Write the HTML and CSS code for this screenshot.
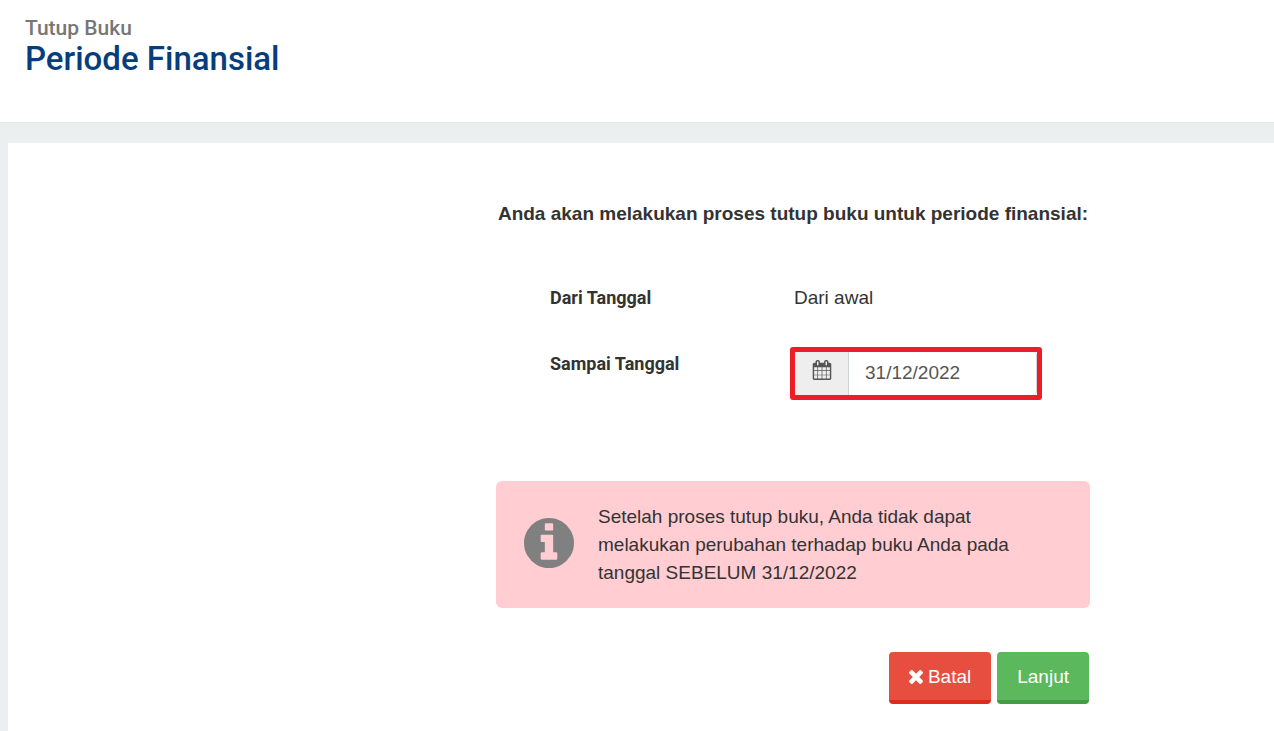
FILE: index.html
```
<!DOCTYPE html>
<html lang="id">
<head>
  <meta charset="UTF-8" />
  <title>Tutup Buku - Periode Finansial</title>
  <meta name="viewport" content="width=device-width, initial-scale=1" />
  <link rel="stylesheet" href="styles.css">
</head>
<body>

  <header class="page-header">
    <p class="page-section">Tutup Buku</p>
    <h1>Periode Finansial</h1>
  </header>

  <main class="panel">
    <form class="closing-form">
      <h2>Anda akan melakukan proses tutup buku untuk periode finansial:</h2>

      <div class="period">
        <span class="label">Dari Tanggal</span>
        <span class="value">Dari awal</span>

        <label class="label label-field" for="endDate">Sampai Tanggal</label>
        <div class="date-group">
          <span class="date-icon">
            <svg viewBox="0 0 1792 1792" aria-hidden="true"><path d="M192 1664h288v-288h-288v288zm352 0h320v-288h-320v288zm-352-352h288v-320h-288v320zm352 0h320v-320h-320v320zm-352-384h288v-288h-288v288zm736 736h320v-288h-320v288zm-384-736h320v-288h-320v288zm768 736h288v-288h-288v288zm-384-352h320v-320h-320v320zm-352-864v-288q0-13-9.500-22.500t-22.500-9.500h-64q-13 0-22.500 9.500t-9.500 22.500v288q0 13 9.500 22.500t22.500 9.500h64q13 0 22.500-9.500t9.500-22.500zm736 864h288v-320h-288v320zm-384-384h320v-288h-320v288zm384 0h288v-288h-288v288zm32-480v-288q0-13-9.500-22.500t-22.500-9.500h-64q-13 0-22.500 9.500t-9.500 22.500v288q0 13 9.500 22.500t22.500 9.500h64q13 0 22.500-9.500t9.500-22.500zm384-64v1280q0 52-38 90t-90 38h-1408q-52 0-90-38t-38-90v-1280q0-52 38-90t90-38h128v-96q0-66 47-113t113-47h64q66 0 113 47t47 113v96h384v-96q0-66 47-113t113-47h64q66 0 113 47t47 113v96h128q52 0 90 38t38 90z"/></svg>
          </span>
          <input type="text" id="endDate" value="31/12/2022" />
        </div>
      </div>

      <div class="notice">
        <svg class="notice-icon" viewBox="128 128 1536 1536" aria-hidden="true"><path d="M1152 1376v-160q0-14-9-23t-23-9h-96v-512q0-14-9-23t-23-9h-320q-14 0-23 9t-9 23v160q0 14 9 23t23 9h96v320h-96q-14 0-23 9t-9 23v160q0 14 9 23t23 9h448q14 0 23-9t9-23zm-128-896v-160q0-14-9-23t-23-9h-192q-14 0-23 9t-9 23v160q0 14 9 23t23 9h192q14 0 23-9t9-23zm640 416q0 209-103 385.500t-279.500 279.500-385.500 103-385.500-103-279.500-279.500-103-385.500 103-385.500 279.500-279.500 385.500-103 385.500 103 279.500 279.500 103 385.500z"/></svg>
        <p>Setelah proses tutup buku, Anda tidak dapat melakukan perubahan terhadap buku Anda pada tanggal SEBELUM 31/12/2022</p>
      </div>

      <div class="actions">
        <button type="button" class="btn btn-danger">
          <svg viewBox="302 366 1188 1188" aria-hidden="true"><path d="M1490 1322q0 40-28 68l-136 136q-28 28-68 28t-68-28l-294-294-294 294q-28 28-68 28t-68-28l-136-136q-28-28-28-68t28-68l294-294-294-294q-28-28-28-68t28-68l136-136q28-28 68-28t68 28l294 294 294-294q28-28 68-28t68 28l136 136q28 28 28 68t-28 68l-294 294 294 294q28 28 28 68z"/></svg>
          Batal
        </button>
        <button type="submit" class="btn btn-success">Lanjut</button>
      </div>
    </form>
  </main>

</body>
</html>
```

FILE: styles.css
```
* {
  box-sizing: border-box;
}

body {
  margin: 0;
  min-height: 100vh;
  display: flex;
  flex-direction: column;
  background: #ebeff0;
  font-family: "Liberation Sans", Arial, sans-serif;
  font-size: 19px;
  line-height: 28px;
  color: #333;
}

.page-header {
  padding: 16px 25px 44px;
  background: #fff;
  border-bottom: 1px solid #e3e8e9;
  font-family: Roboto, sans-serif;
}

.page-section {
  margin: 0;
  font-size: 21px;
  font-weight: 500;
  line-height: 24px;
  color: #777;
}

h1 {
  margin: 0;
  font-size: 33px;
  font-weight: 500;
  line-height: 38px;
  color: #073d7c;
}

.panel {
  flex: 1;
  margin: 20px 0 0 8px;
  padding: 57px 184px 27px 24px;
  background: #fff;
}

.closing-form {
  max-width: 594px;
  margin-left: auto;
}

h2 {
  margin: 0;
  font-size: 19px;
  line-height: 28px;
  text-align: center;
}

.period {
  display: grid;
  grid-template-columns: 240px 252px;
  row-gap: 35px;
  padding: 56px 0 81px 54px;
}

.label {
  font-family: Roboto, sans-serif;
  font-size: 18px;
  font-weight: 700;
}

.label-field {
  padding-top: 3px;
}

.value {
  padding-left: 4px;
}

.date-group {
  display: flex;
  height: 53px;
  border: 5px solid #ee1c25;
  border-radius: 3px;
}

.date-icon {
  width: 54px;
  display: flex;
  justify-content: center;
  padding-top: 8px;
  background: #eee;
  border-right: 1px solid #cbd5d6;
}

.date-icon svg {
  width: 20px;
  height: 20px;
  fill: #555;
}

.date-group input {
  flex: 1;
  min-width: 0;
  padding: 0 16px 2px;
  border: 0;
  border-right: 1px solid #cbd5d6;
  border-radius: 0 4px 4px 0;
  background: #fff;
  font: inherit;
  color: #555;
}

.notice {
  display: flex;
  align-items: center;
  gap: 24px;
  padding: 22px 72px 21px 28px;
  background: #ffcdd2;
  border-radius: 6px;
}

.notice-icon {
  flex: none;
  width: 50px;
  height: 50px;
  margin-bottom: 4px;
  fill: #808080;
}

.notice p {
  margin: 0;
}

.actions {
  display: flex;
  justify-content: flex-end;
  gap: 6px;
  padding: 44px 1px 0 0;
}

.btn {
  display: flex;
  align-items: center;
  gap: 5px;
  padding: 11px 20px 9px;
  border: 0;
  border-bottom: 4px solid;
  border-radius: 4px;
  color: #fff;
  font: inherit;
  line-height: 28px;
  cursor: pointer;
}

.btn svg {
  width: 14px;
  height: 14px;
  fill: #fff;
}

.btn-danger {
  background: #e84e40;
  border-color: #dd2c1d;
}

.btn-success {
  background: #5cb85c;
  border-color: #449d44;
}
```
